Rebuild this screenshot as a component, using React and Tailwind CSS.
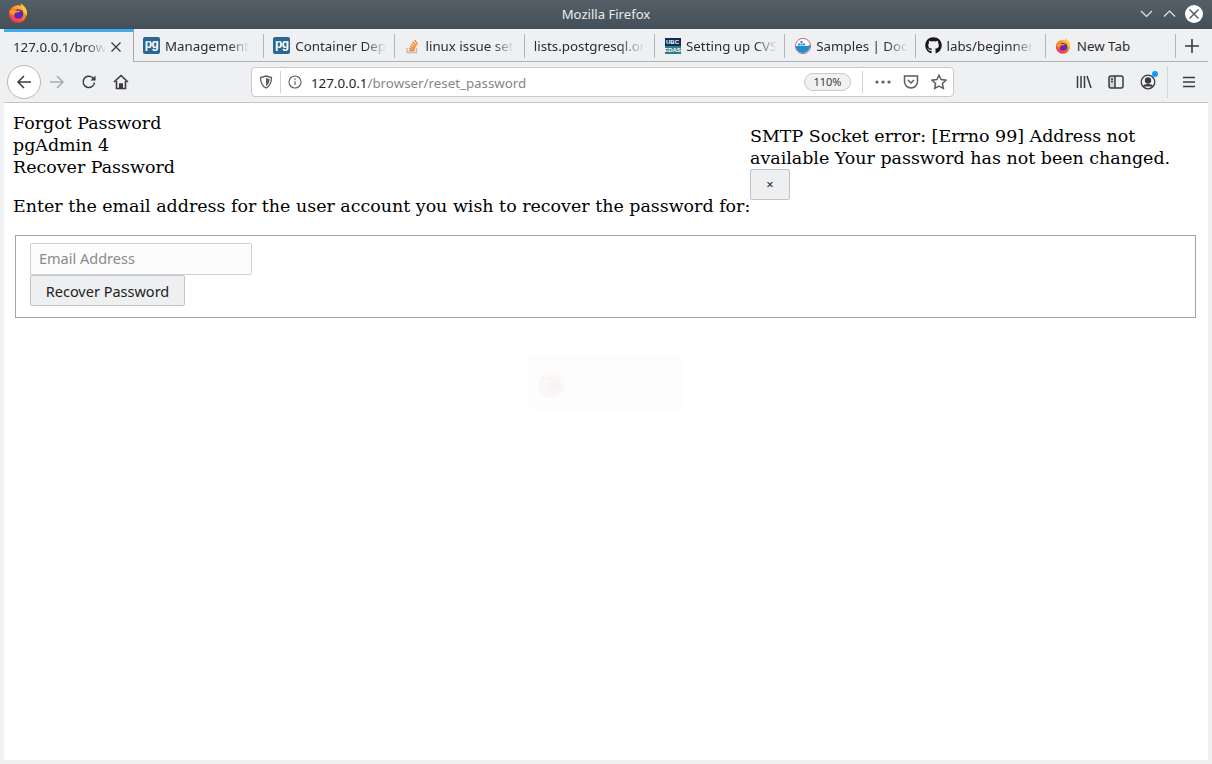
import React from "react";
import { FaGithub } from "react-icons/fa";

const Fox = ({ size = 20 }) => (
  <svg width={size} height={size} viewBox="0 0 20 20">
    <defs>
      <linearGradient id="fx" x1="0.8" y1="0" x2="0.2" y2="1">
        <stop offset="0" stopColor="#ffd43a" />
        <stop offset="0.45" stopColor="#ff7a1f" />
        <stop offset="1" stopColor="#f0246e" />
      </linearGradient>
    </defs>
    <circle cx="9.8" cy="11" r="8.8" fill="url(#fx)" />
    <path d="M12.5 .3c2.6 1.500 6.500 4.900 6.500 9.500 0 1-.2 2-.6 3l-4-6.500c-.9-2-1.700-4.500-1.900-6z" fill="#ffc62e" />
    <circle cx="10.500" cy="11" r="4.800" fill="#5b2bb5" />
    <path d="M1.500 8c1.500-1 4-1 6 -.4 1.800.5 4 .4 5-.6-.2 1.800-2 2.600-4 2.500-1.600 0-2.500 1-2 3-2.500-.8-4.700-2.600-5-4.500z" fill="#ff9a22" />
  </svg>
);

const Pg = () => (
  <span className="flex h-[17px] w-[17px] items-center justify-center rounded-[2px] bg-[#2c6695] font-['Liberation_Sans',sans-serif] text-[12px] leading-none font-bold tracking-[-0.5px] text-white">
    <span className="-mt-[3px]">pg</span>
  </span>
);

const So = () => (
  <svg width="16" height="16" viewBox="0 0 16 16" fill="none">
    <path d="M3 10v4.500h9.500V10" stroke="#bcbbbb" strokeWidth="1.300" />
    <path d="M5 12.700h5.500M5.200 10.500l5.400.8M5.800 8.300l5.200 1.900M7 6l4.600 3M8.700 3.800l3.700 4.100M11 2l2.300 4.800" stroke="#f48024" strokeWidth="1.300" />
  </svg>
);

const Ubc = () => (
  <span className="flex h-4 w-4 flex-col overflow-hidden font-['Liberation_Sans',sans-serif] text-[6px] leading-none font-bold text-white">
    <span className="flex h-[8px] items-center justify-center bg-[#0b2d56]">UBC</span>
    <span className="flex h-[8px] items-center justify-center bg-[#2f7f86]">EDAS</span>
  </span>
);

const Docker = () => (
  <svg width="16" height="16" viewBox="0 0 16 16">
    <circle cx="8" cy="8" r="7.600" fill="#fff" stroke="#b7415f" strokeWidth="0.800" />
    <path d="M.8 8h11.500c1 0 1.700-.6 2.300-1l.7.5c-.5 3.500-3 7.500-7.500 7.500C4 15 1 12 .8 8z" fill="#1f8ecd" />
    <path d="M3 5.500h2v2H3zM5.500 5.500h2v2h-2zM8 5.500h2v2H8zM5.500 3h2v2h-2z" fill="#1f8ecd" />
  </svg>
);

const Tab = ({ icon, label, fade = true }) => (
  <div className="flex w-[130.250px] shrink-0 items-center pt-[1px]">
    <div className="flex h-[24px] w-full items-center border-r border-[#b4b5b8] pl-[9px]">
      {icon && <span className="mr-[5px] flex w-[17px] shrink-0 items-center justify-center">{icon}</span>}
      <span
        className={
          "block pt-[2px] whitespace-nowrap " +
          (fade ? "[mask-image:linear-gradient(to_right,#000_76%,transparent_100%)]" : "")
        }
      >
        {label}
      </span>
    </div>
  </div>
);

const Ico = ({ children, w = 16, h = 16, vb = "0 0 16 16", stroke = "#3b3b3f", sw = 1.500 }) => (
  <svg width={w} height={h} viewBox={vb} fill="none" stroke={stroke} strokeWidth={sw}>
    {children}
  </svg>
);

export default function App() {
  return (
    <div className="flex h-[764px] w-[1212px] flex-col overflow-hidden bg-[#eff0f1] font-['Noto_Sans',sans-serif] text-[#232327]">
      {/* title bar */}
      <div className="relative flex h-[29px] items-center justify-center bg-gradient-to-b from-[#545f67] to-[#454f57] text-[13.100px] text-[#e8eaec]">
        <span className="absolute left-[8px] top-[3px]"><Fox size={20} /></span>
        <span>Mozilla Firefox</span>
        <span className="absolute left-[1140px] top-[9px]">
          <Ico w={13} h={10} vb="0 0 13 10" stroke="#e8eaec" sw={1.100}><path d="M1 2l5.500 5.500L12 2" /></Ico>
        </span>
        <span className="absolute left-[1163px] top-[9px]">
          <Ico w={13} h={10} vb="0 0 13 10" stroke="#e8eaec" sw={1.100}><path d="M1 7.500L6.500 2 12 7.500" /></Ico>
        </span>
        <span className="absolute left-[1185px] top-[5px] flex h-[18px] w-[18px] items-center justify-center rounded-full bg-white">
          <Ico w={12} h={12} vb="0 0 12 12" stroke="#4a545c" sw={1.400}><path d="M1.500 1.500l9 9M10.500 1.500l-9 9" /></Ico>
        </span>
      </div>

      {/* tabs */}
      <div className="mx-[4px] flex h-[33px] items-stretch border-b border-[#b0b1b4] text-[13.330px] text-[#2c2c30]">
        <div className="-mb-px flex h-[33px] w-[130px] shrink-0 items-center border-t-[3px] border-r border-t-[#3daee9] border-r-[#a7a8ab] bg-[#eff0f3] pl-[9px]">
          <span className="block w-[93px] pt-[1px] whitespace-nowrap [mask-image:linear-gradient(to_right,#000_78%,transparent_100%)]">127.0.0.1/brow</span>
          <span className="ml-[4px]">
            <Ico w={12} h={12} vb="0 0 12 12" stroke="#3b3b3f" sw={1.300}><path d="M1.500 1.500l9 9M10.500 1.500l-9 9" /></Ico>
          </span>
        </div>
        <Tab icon={<Pg />} label="Management" />
        <Tab icon={<Pg />} label="Container Dep" />
        <Tab icon={<So />} label="linux issue set" />
        <Tab label="lists.postgresql.or" />
        <Tab icon={<Ubc />} label="Setting up CVS" />
        <Tab icon={<Docker />} label="Samples | Doc" />
        <Tab icon={<FaGithub size={17} color="#18181a" />} label="labs/beginner" />
        <Tab icon={<Fox size={16} />} label="New Tab" fade={false} />
        <div className="flex w-[33px] items-center justify-center pt-[1px]">
          <Ico w={14} h={14} vb="0 0 14 14" stroke="#3b3b3f" sw={1.600}><path d="M7 0v14M0 7h14" /></Ico>
        </div>
      </div>

      {/* nav bar */}
      <div className="relative mx-[4px] flex h-[41px] items-center border-b border-[#c4c5c8] pl-[3px]">
        <div className="flex h-[34px] w-[34px] items-center justify-center rounded-full border border-[#b6b7ba] bg-white">
          <Ico><path d="M15 8H2M8 2L2 8l6 6" /></Ico>
        </div>
        <span className="ml-[8px]">
          <Ico stroke="#a9aaad"><path d="M1 8h13M8 2l6 6-6 6" /></Ico>
        </span>
        <span className="ml-[16px]">
          <Ico><path d="M13.500 8.500A5.700 5.700 0 1 1 11.500 3.500L14 6" /><path d="M14.500 1.500V6.500H9.500" fill="#3b3b3f" stroke="none" /></Ico>
        </span>
        <span className="ml-[16px]">
          <Ico sw={1.600}><path d="M1 8l7-6.500L15 8M3.500 7v7.500h9V7" /><path d="M6.800 14.500V10h2.400v4.500" fill="#3b3b3f" /></Ico>
        </span>
        <div className="ml-[122px] flex h-[30px] w-[703px] items-center rounded-[4px] border border-[#c8c9cc] bg-white text-[13.330px]">
          <span className="ml-[7px]">
            <Ico w={14} h={14} vb="0 0 14 14" stroke="#5c5c61" sw={1.300}><path d="M7 1l5.500 1.500c0 5-1.500 8.500-5.500 10.500C3 11 1.500 7.500 1.500 2.500z" /><path d="M7 3l3.500 1C10.500 7.500 9.500 9.500 7 11z" fill="#5c5c61" stroke="none" /></Ico>
          </span>
          <span className="ml-[7px] h-[22px] border-l border-[#cfd0d3]" />
          <span className="ml-[7px]">
            <Ico w={14} h={14} vb="0 0 14 14" stroke="#5c5c61" sw={1.100}><circle cx="7" cy="7" r="6" /><path d="M7 6v4M7 3.500v1.500" /></Ico>
          </span>
          <span className="ml-[9px] pt-[3px] text-[#232327]">127.0.0.1<span className="text-[#85858a]">/browser/reset_password</span></span>
          <span className="ml-auto flex h-[18px] w-[47px] items-center justify-center rounded-full border border-[#c8c9cc] bg-[#f1f1f2] text-[11px] text-[#3b3b3f]">110%</span>
          <span className="ml-[11px] h-[22px] border-l border-[#cfd0d3]" />
          <span className="ml-[12px]">
            <svg width="16" height="4" viewBox="0 0 16 4" fill="#5c5c61"><circle cx="2" cy="2" r="1.600" /><circle cx="8" cy="2" r="1.600" /><circle cx="14" cy="2" r="1.600" /></svg>
          </span>
          <span className="ml-[12px]">
            <Ico stroke="#5c5c61" sw={1.500}><path d="M1.500 2h13v5.500a6.500 6.500 0 0 1-13 0z" /><path d="M5 6l3 3 3-3" /></Ico>
          </span>
          <span className="ml-[12px] mr-[6px]">
            <Ico stroke="#5c5c61" sw={1.500}><path d="M8 1.200l2.100 4.400 4.800.6-3.500 3.300.9 4.800L8 12l-4.300 2.300.9-4.800L1.100 6.200l4.800-.6z" /></Ico>
          </span>
        </div>
        <span className="ml-[122px]">
          <Ico><path d="M1.500 2v12M5 2v12M8.500 2v12M11 2l4 12" /></Ico>
        </span>
        <span className="ml-[16px]">
          <Ico><rect x="1" y="2" width="14" height="12" rx="2" /><path d="M7 2v12" /><path d="M1 2h6v12H1z" fill="#3b3b3f" fillOpacity="0.15" stroke="none" /><path d="M3 5h2M3 7.500h2" /></Ico>
        </span>
        <span className="relative ml-[16px]">
          <Ico sw={1.300}><circle cx="8" cy="8" r="6.800" /><circle cx="8" cy="6.500" r="2.500" fill="#3b3b3f" /><path d="M3.500 12.500c1-2.500 8-2.500 9 0" fill="#3b3b3f" /></Ico>
          <span className="absolute -right-[2px] -top-[3px] h-[6px] w-[6px] rounded-full bg-[#0a9dff]" />
        </span>
        <span className="ml-[11px] h-[32px] border-l border-[#d4d5d8]" />
        <span className="ml-[14px]">
          <Ico w={14} h={14} vb="0 0 14 14" sw={1.600}><path d="M1 2.500h12M1 7h12M1 11.500h12" /></Ico>
        </span>
      </div>

      {/* page */}
      <div className="relative mx-[4px] flex-1 bg-white font-['DejaVu_Serif',serif] text-[17.450px] leading-[22px] text-black">
        <div className="flex pl-[9px] pt-[9px]">
          <div className="w-[737px] shrink-0 whitespace-nowrap">
            <div>Forgot Password</div>
            <div>pgAdmin 4</div>
            <div>Recover Password</div>
            <p className="mt-[17px]">Enter the email address for the user account you wish to recover the password for:</p>
          </div>
          <div className="mt-[13px] w-[450px]">
            <div>SMTP Socket error: [Errno 99] Address not available Your password has not been changed.</div>
            <button className="block h-[31px] w-[40px] rounded-[2px] border border-[#c3c4c7] bg-[#eeeff1] font-['Noto_Sans',sans-serif] text-[13px] leading-none text-[#222]">×</button>
          </div>
        </div>

        <div className="ml-[11px] mr-[12px] mt-[18px] flex h-[83px] flex-col items-start border border-[#a3a3a3] pl-[14px] pt-[7px] font-['Noto_Sans',sans-serif] text-[14.500px]">
          <input
            placeholder="Email Address"
            className="h-[32px] w-[222px] rounded-[2px] border border-[#cfd0d2] bg-[#fcfcfc] px-[8px] pb-[2px] text-[14.500px] outline-none placeholder:text-[#8a8a8a]"
          />
          <button className="h-[31px] w-[155px] rounded-[2px] border border-[#c3c4c7] bg-[#eeeff1] pt-[1px] text-[14.500px] leading-none text-[#222]">Recover Password</button>
        </div>

        <div className="absolute left-[524px] top-[252px] flex h-[55px] w-[155px] items-center rounded-[4px] bg-[#fdfdfe] pl-[9px] font-['Noto_Sans',sans-serif] text-[14px] leading-[18px] text-white">
          <span className="opacity-[0.04]"><Fox size={30} /></span>
          <span className="ml-[10px]">Mozilla Firefox</span>
        </div>
      </div>
      <div className="h-[4px]" />
    </div>
  );
}
